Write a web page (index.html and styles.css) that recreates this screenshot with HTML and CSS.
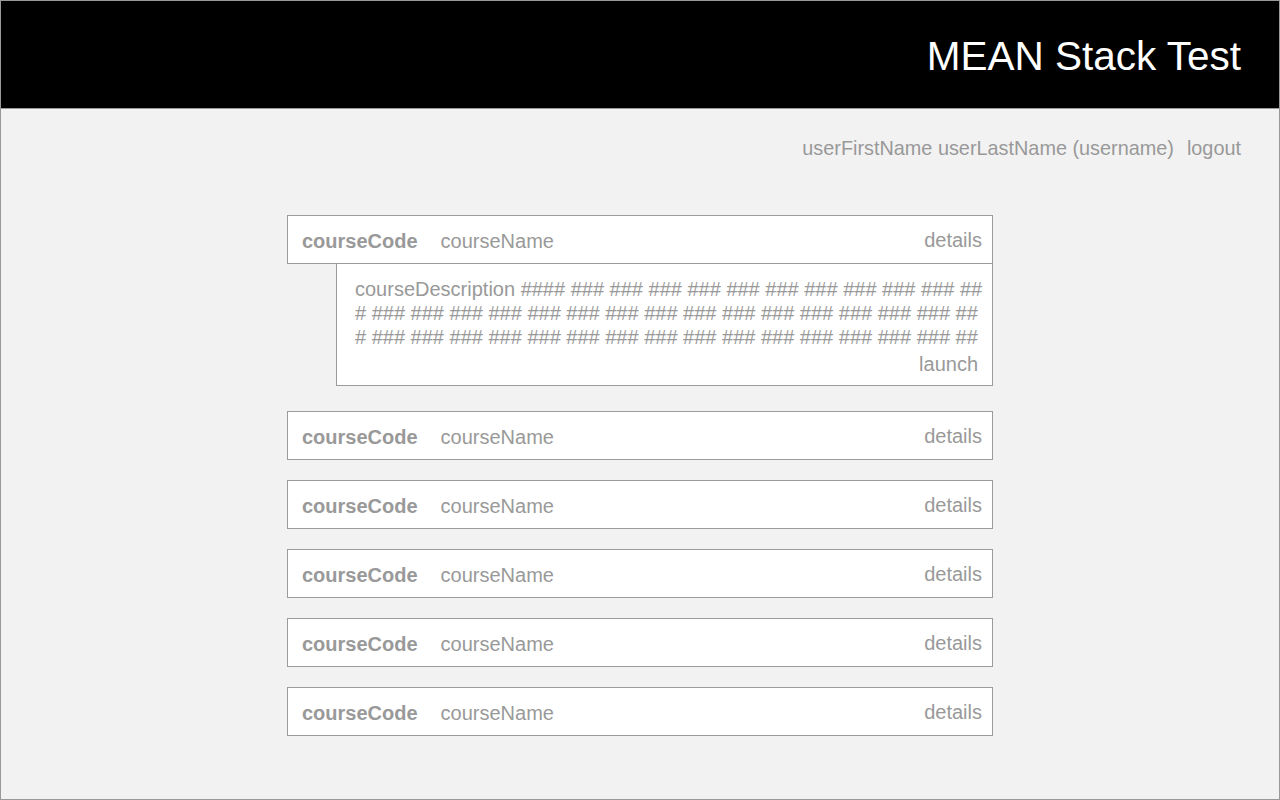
FILE: index.html
```html
<!DOCTYPE html>
<html lang="en">
<head>
<meta charset="utf-8">
<title>MEAN Stack Test</title>
<link rel="stylesheet" href="styles.css">
</head>
<body>
<div class="frame">
  <header class="topbar">
    <h1 class="title">MEAN Stack Test</h1>
  </header>
  <main class="content">
    <div class="userbar">
      <span class="user-name">userFirstName userLastName (username)</span>
      <a class="logout">logout</a>
    </div>
    <ul class="courses">
      <li class="course">
        <div class="course-row">
          <span class="code">courseCode</span>
          <span class="name">courseName</span>
          <span class="details">details</span>
        </div>
        <div class="course-desc">
          <p class="desc-text">courseDescription #### ### ### ### ### ### ### ### ### ### ### ### ### ### ### ### ### ### ### ### ### ### ### ### ### ### ### ### ### ### ### ### ### ### ### ### ### ### ### ### ### ### ### ##</p>
          <div class="launch-row"><span class="launch">launch</span></div>
        </div>
      </li>
      <li class="course">
        <div class="course-row">
          <span class="code">courseCode</span>
          <span class="name">courseName</span>
          <span class="details">details</span>
        </div>
      </li>
      <li class="course">
        <div class="course-row">
          <span class="code">courseCode</span>
          <span class="name">courseName</span>
          <span class="details">details</span>
        </div>
      </li>
      <li class="course">
        <div class="course-row">
          <span class="code">courseCode</span>
          <span class="name">courseName</span>
          <span class="details">details</span>
        </div>
      </li>
      <li class="course">
        <div class="course-row">
          <span class="code">courseCode</span>
          <span class="name">courseName</span>
          <span class="details">details</span>
        </div>
      </li>
      <li class="course">
        <div class="course-row">
          <span class="code">courseCode</span>
          <span class="name">courseName</span>
          <span class="details">details</span>
        </div>
      </li>
    </ul>
  </main>
</div>
</body>
</html>
```

FILE: styles.css
```css
html, body {
  margin: 0;
  padding: 0;
}

body {
  font-family: "Liberation Sans", Arial, sans-serif;
  color: #999999;
}

.frame {
  box-sizing: border-box;
  width: 1280px;
  height: 800px;
  border: 1px solid #999999;
  background: #f2f2f2;
  overflow: hidden;
  display: flex;
  flex-direction: column;
}

.topbar {
  box-sizing: border-box;
  height: 108px;
  background: #000000;
  border-bottom: 1px solid #999999;
  padding: 32px 38px 0 0;
  display: flex;
  justify-content: flex-end;
}

.title {
  margin: 0;
  font-size: 40.5px;
  font-weight: normal;
  line-height: 46px;
  color: #ffffff;
}

.content {
  display: flex;
  flex-direction: column;
}

.userbar {
  display: flex;
  justify-content: flex-end;
  padding: 28px 38px 0 0;
  font-size: 19.85px;
  line-height: 22px;
}

.logout {
  margin-left: 13px;
  cursor: pointer;
}

.courses {
  list-style: none;
  margin: 56px auto 0;
  padding: 0;
  width: 706px;
  display: flex;
  flex-direction: column;
  gap: 20px;
}

.course-row {
  box-sizing: border-box;
  height: 49px;
  background: #ffffff;
  border: 1px solid #9b9b9b;
  padding: 14px 10px 11px 14px;
  display: flex;
  align-items: flex-start;
  font-size: 20px;
  line-height: 22px;
}

.code {
  font-weight: bold;
}

.name {
  margin-left: 23px;
}

.details {
  margin-left: auto;
  position: relative;
  top: -1px;
}

.course-desc {
  margin: 0 0 5px 49px;
  background: #ffffff;
  border: 1px solid #9b9b9b;
  border-top: none;
  padding: 13px 7px 9px 18px;
  font-size: 20px;
}

.desc-text {
  margin: 0;
  line-height: 24px;
  word-break: break-all;
}

.launch-row {
  margin-top: 3px;
  line-height: 24px;
  text-align: right;
  padding-right: 7px;
}
```
